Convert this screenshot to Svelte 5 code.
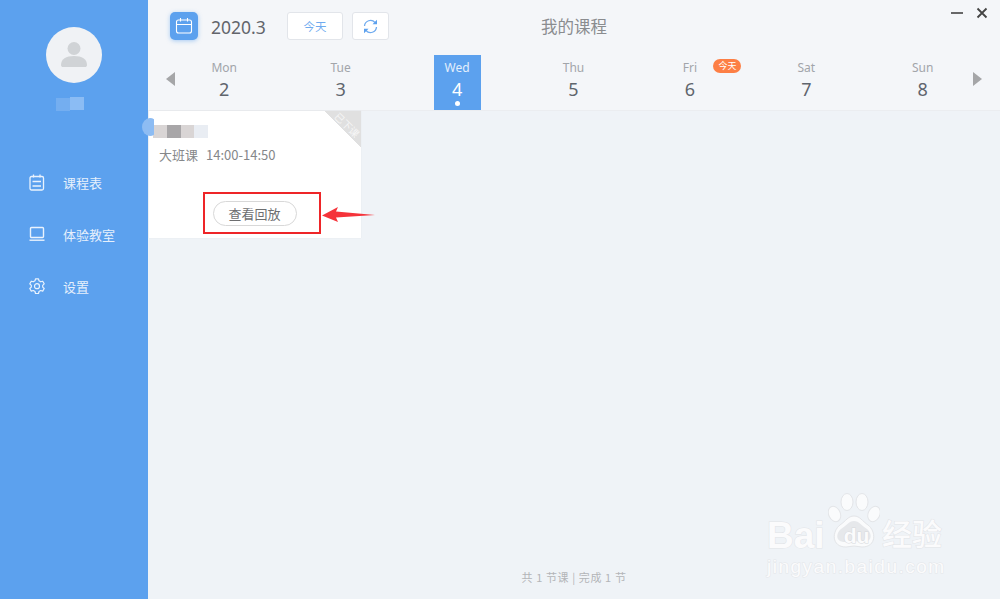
<script>
  const days = [
    { name: 'Mon', num: 2 },
    { name: 'Tue', num: 3 },
    { name: 'Wed', num: 4, active: true },
    { name: 'Thu', num: 5 },
    { name: 'Fri', num: 6, today: true },
    { name: 'Sat', num: 7 },
    { name: 'Sun', num: 8 }
  ];
</script>

<div class="window">
  <aside class="sidebar">
    <div class="avatar">
      <svg width="32" height="32" viewBox="0 0 32 32">
        <circle cx="16" cy="9.5" r="6.5" fill="#d0d3d6" />
        <path d="M3 26c0-6 5-9 13-9s13 3 13 9c0 1.500-1 2-2 2H5c-1 0-2-.5-2-2z" fill="#d0d3d6" />
      </svg>
    </div>
    <div class="username"><i class="b1"></i><i class="b2"></i></div>
    <nav class="nav">
      <div class="nav-item">
        <svg width="16" height="17" viewBox="0 0 16 17" fill="none" stroke="#eaf3fd" stroke-width="1.300">
          <rect x="1" y="2.500" width="13.500" height="13.500" rx="1.500" />
          <path d="M4.500 .5v3M11 .5v3M3.500 7.500h8.500M3.500 12h8.500" />
        </svg>
        <span>课程表</span>
      </div>
      <div class="nav-item">
        <svg width="16" height="16" viewBox="0 0 16 16" fill="none" stroke="#eaf3fd" stroke-width="1.400">
          <rect x="1.500" y="1.500" width="13" height="10" rx="1" />
          <path d="M0.500 14.200h15" />
        </svg>
        <span>体验教室</span>
      </div>
      <div class="nav-item">
        <svg width="16" height="16" viewBox="0 0 16 16" fill="none" stroke="#eaf3fd" stroke-width="1.200">
          <path d="M6.500 .8h3l.5 2 1.700 1 2-.6 1.500 2.600-1.500 1.500v1.800l1.500 1.400-1.500 2.600-2-.6-1.700 1-.5 2h-3l-.5-2-1.700-1-2 .6L.8 10.500l1.500-1.400V7.300L.8 5.800l1.500-2.600 2 .6L6 2.800z" stroke-linejoin="round" />
          <circle cx="8" cy="8.200" r="2.500" />
        </svg>
        <span>设置</span>
      </div>
    </nav>
  </aside>

  <main class="main">
    <header class="header">
      <div class="topbar">
        <div class="cal-icon">
          <svg width="18" height="18" viewBox="0 0 18 18" fill="none" stroke="#fff" stroke-width="1.100">
            <rect x="1.500" y="3" width="15" height="13" rx="2" />
            <path d="M1.500 7.500h15M5.500 1v3.500M12.500 1v3.500" />
          </svg>
        </div>
        <span class="month">2020.3</span>
        <button class="today-btn">今天</button>
        <button class="refresh-btn">
          <svg width="15" height="15" viewBox="0 0 15 15" fill="none" stroke="#6fabef" stroke-width="1.300">
            <path d="M1.500 7A6 6 0 0 1 12 3.500" />
            <path d="M13.500 8A6 6 0 0 1 3 11.500" />
            <path d="M9.500 5.200h4.500V.8zM5.500 9.800H1v4.400z" fill="#5ca1ee" stroke="none" />
          </svg>
        </button>
        <span class="title">我的课程</span>
        <div class="win-controls">
          <svg width="12" height="12" viewBox="0 0 12 12" stroke="#444" stroke-width="1.600"><path d="M0 6h12" /></svg>
          <svg width="12" height="12" viewBox="0 0 12 12" stroke="#444" stroke-width="1.800"><path d="M1.500 1.500l9 9M10.500 1.500l-9 9" /></svg>
        </div>
      </div>
      <div class="week">
        <span class="arrow left"></span>
        <div class="days">
          {#each days as d}
            <div class="day">
              <div class="day-inner" class:active={d.active}>
                <span class="day-name">{d.name}</span>
                <span class="day-num">{d.num}</span>
                {#if d.active}<i class="dot"></i>{/if}
                {#if d.today}<span class="badge">今天</span>{/if}
              </div>
            </div>
          {/each}
        </div>
        <span class="arrow right"></span>
      </div>
    </header>

    <section class="content">
      <article class="card">
        <div class="corner"><span>已下课</span></div>
        <div class="course-name"><i class="c1"></i><i class="c2"></i><i class="c3"></i><i class="c4"></i></div>
        <div class="course-meta"><span>大班课</span><span>14:00-14:50</span></div>
        <div class="card-action">
          <div class="highlight"><button class="replay">查看回放</button></div>
          <svg class="red-arrow" width="54" height="15" viewBox="0 0 54 15"><path d="M0 8.500L16 0l-2 4.500 39 3.500-39 2.500 2 4.500z" fill="#f5333a" /></svg>
        </div>
        <i class="tab"></i>
      </article>
      <div class="footer">共 1 节课 | 完成 1 节</div>
      <div class="watermark">
        <svg class="paw" width="52" height="55" viewBox="0 0 52 55" stroke-width="1">
          <g fill="#fafbfc" stroke="#e3e5e8">
            <ellipse cx="6.500" cy="21" rx="5.800" ry="8" transform="rotate(-25 6.500 21)" />
            <ellipse cx="19" cy="9" rx="6" ry="8.500" />
            <ellipse cx="34" cy="9" rx="6" ry="8.500" />
            <ellipse cx="46" cy="21" rx="5.800" ry="8" transform="rotate(25 46 21)" />
            <path d="M26 23c6 0 8 5 14 9 8 6 9 22-6 22-3 0-5-1-8-1s-5 1-8 1c-15 0-14-16-6-22 6-4 8-9 14-9z" />
          </g>
          <path d="M26 28c5 0 8 5 13 8 5 4 6 13-4 13-3 0-6-1-9-1s-6 1-9 1c-10 0-9-9-4-13 5-3 8-8 13-8z" fill="#e6e8eb" />
        </svg>
        <div class="wm-top"><span class="wm-bai">Bai</span><span class="wm-du">du</span><span class="wm-cn">经验</span></div>
        <div class="wm-url">jingyan.baidu.com</div>
      </div>
    </section>
  </main>
</div>

<style>
  :global(body) { margin: 0; overflow: hidden; }
  .window {
    width: 1000px;
    height: 599px;
    display: flex;
    font-family: "Noto Sans CJK SC", "Noto Sans", sans-serif;
    background: #eff3f7;
  }
  .sidebar {
    width: 148px;
    flex: none;
    background: #5ca1ee;
    display: flex;
    flex-direction: column;
    align-items: center;
    padding-top: 27px;
    box-sizing: border-box;
  }
  .avatar {
    width: 56px;
    height: 56px;
    border-radius: 50%;
    background: #f0f2f5;
    display: flex;
    align-items: center;
    justify-content: center;
  }
  .username { display: flex; margin-top: 14px; height: 14px; margin-right: 8px; }
  .username i { display: block; width: 14px; }
  .b1 { background: #74aef0; height: 13px; margin-top: 1px; }
  .b2 { background: #8bbcf4; height: 13px; }
  .nav {
    align-self: stretch;
    margin-top: 58px;
    display: flex;
    flex-direction: column;
    gap: 26px;
    padding-left: 29px;
  }
  .nav-item {
    display: flex;
    align-items: center;
    gap: 18px;
    height: 26px;
    font-size: 13px;
    color: #e6f0fc;
  }
  .main { flex: 1; min-width: 0; display: flex; flex-direction: column; }
  .header {
    height: 110px;
    flex: none;
    background: #f4f6f9;
    border-bottom: 1px solid #ebedf0;
    box-sizing: content-box;
    display: flex;
    flex-direction: column;
  }
  .topbar {
    height: 55px;
    flex: none;
    display: flex;
    align-items: center;
    padding: 0 0 3px 22px;
    box-sizing: border-box;
    position: relative;
  }
  .cal-icon {
    width: 28px;
    height: 28px;
    background: #5ca1ee;
    border-radius: 5px;
    display: flex;
    align-items: center;
    justify-content: center;
    box-shadow: 0 1px 4px rgba(92, 161, 238, .5);
  }
  .month {
    margin-left: 13px;
    font-size: 17.500px;
    color: #62656b;
    font-family: "Noto Sans", sans-serif;
    width: 76px;
    position: relative;
    top: 1px;
  }
  button { font-family: inherit; padding: 0; }
  .today-btn {
    width: 56px;
    height: 28px;
    background: #fff;
    border: 1px solid #e2e5ea;
    border-radius: 3px;
    color: #6fabef;
    font-size: 11.500px;
  }
  .refresh-btn {
    width: 37px;
    height: 28px;
    margin-left: 9px;
    background: #fff;
    border: 1px solid #e2e5ea;
    border-radius: 3px;
    display: flex;
    align-items: center;
    justify-content: center;
  }
  .title {
    margin-left: 152px;
    font-size: 16.500px;
    color: #8a8c8f;
  }
  .win-controls {
    position: absolute;
    top: 7px;
    right: 12px;
    display: flex;
    gap: 13px;
  }
  .week { flex: 1; display: flex; align-items: center; position: relative; }
  .days {
    position: absolute;
    left: 18px;
    right: 19px;
    top: 0;
    bottom: 0;
    display: flex;
  }
  .arrow {
    position: absolute;
    top: 17px;
    width: 0;
    height: 0;
    border-top: 7px solid transparent;
    border-bottom: 7px solid transparent;
  }
  .arrow.left { left: 18px; border-right: 9px solid #a5a6a8; }
  .arrow.right { right: 18px; border-left: 9px solid #a5a6a8; }
  .day { flex: 1; display: flex; justify-content: center; }
  .day-inner {
    width: 47px;
    position: relative;
    display: flex;
    flex-direction: column;
    align-items: center;
    padding-top: 5px;
    box-sizing: border-box;
    font-family: "Noto Sans", sans-serif;
  }
  .day-name { font-size: 12px; line-height: 16px; color: #a2a5aa; }
  .day-num { font-size: 18px; line-height: 24px; margin-top: 1px; color: #5f656d; }
  .active { background: #5ca1ee; }
  .active .day-name { color: #e3effc; }
  .active .day-num { color: #fff; }
  .dot {
    position: absolute;
    bottom: 4px;
    left: 21px;
    width: 5px;
    height: 5px;
    border-radius: 50%;
    background: #fff;
  }
  .badge {
    position: absolute;
    left: 47px;
    top: 4px;
    width: 28px;
    height: 14px;
    border-radius: 7px;
    background: #fd7f45;
    color: #fff;
    font-size: 9px;
    line-height: 14px;
    text-align: center;
    font-family: "Noto Sans CJK SC", sans-serif;
  }
  .content { flex: 1; position: relative; min-height: 0; background: #eff3f7; }
  .card {
    position: relative;
    width: 212px;
    height: 127px;
    margin-left: 1px;
    background: #fff;
    box-sizing: border-box;
    padding: 14px 0 0 10px;
    display: flex;
    flex-direction: column;
    box-shadow: 0 0 1px rgba(0, 0, 0, .08);
  }
  .tab {
    position: absolute;
    left: -7px;
    top: 7px;
    width: 16px;
    height: 18px;
    border-radius: 50%;
    background: #8dbcf3;
    clip-path: inset(0 4px 0 0);
  }
  .corner {
    position: absolute;
    top: 0;
    right: 0;
    width: 37px;
    height: 37px;
    background: linear-gradient(45deg, transparent 50%, #e0e0e0 50%);
  }
  .corner span {
    position: absolute;
    top: 9px;
    left: 8px;
    font-size: 10px;
    line-height: 10px;
    color: #f6f6f6;
    transform: rotate(45deg);
    white-space: nowrap;
  }
  .course-name { display: flex; height: 13px; margin-left: -6px; }
  .course-name i { display: block; width: 13.750px; height: 13px; }
  .c1 { background: #d9d5d5; }
  .c2 { background: #a8a6a8; }
  .c3 { background: #d9d5d5; }
  .c4 { background: #e9edf3; }
  .course-meta {
    display: flex;
    gap: 8px;
    margin-top: 8px;
    font-size: 13px;
    line-height: 18px;
    color: #85878a;
    font-family: "Noto Sans CJK SC", sans-serif;
  }
  .card-action { position: absolute; left: 54px; top: 81px; display: flex; align-items: center; }
  .highlight {
    width: 118px;
    height: 42px;
    box-sizing: border-box;
    border: 2.500px solid #ee2528;
    padding-left: 7.500px;
    display: flex;
    align-items: center;
  }
  .replay {
    width: 84px;
    height: 25px;
    background: #fff;
    border: 1px solid #d8d8d8;
    border-radius: 13px;
    font-size: 13px;
    color: #6d6e70;
  }
  .red-arrow { margin: 3px 0 0 1px; }
  .footer {
    position: absolute;
    left: 0;
    right: 0;
    bottom: 14px;
    text-align: center;
    font-size: 11px;
    line-height: 16px;
    letter-spacing: .6px;
    color: #b3b5b8;
  }
  .watermark {
    position: absolute;
    left: 619px;
    top: 382px;
    width: 180px;
    height: 90px;
    color: #fbfbfc;
  }
  .paw { position: absolute; left: 61px; top: 0; }
  .wm-top {
    position: absolute;
    top: 20px;
    left: 0;
    display: flex;
    align-items: baseline;
    font-family: "Liberation Sans", sans-serif;
    font-weight: 700;
    font-size: 37px;
    line-height: 44px;
    -webkit-text-stroke: 1px #e2e4e7;
    paint-order: stroke fill;
    white-space: nowrap;
  }
  .wm-bai { width: 60px; }
  .wm-du {
    width: 35px;
    margin-left: 12px;
    font-size: 21px;
    color: #fbfbfc;
    -webkit-text-stroke: 1px #d8dadd;
    position: relative;
    top: -5px;
    text-align: center;
  }
  .wm-cn {
    margin-left: 8px;
    font-family: "Noto Sans CJK SC", sans-serif;
    font-weight: 500;
    font-size: 30px;
    width: 60px;
    position: relative;
    top: -3px;
  }
  .wm-url {
    position: absolute;
    top: 62px;
    left: 0;
    font-family: "Liberation Sans", sans-serif;
    font-size: 19px;
    line-height: 24px;
    letter-spacing: 1.500px;
    -webkit-text-stroke: 1px #e4e6e9;
    paint-order: stroke fill;
    white-space: nowrap;
  }
</style>
